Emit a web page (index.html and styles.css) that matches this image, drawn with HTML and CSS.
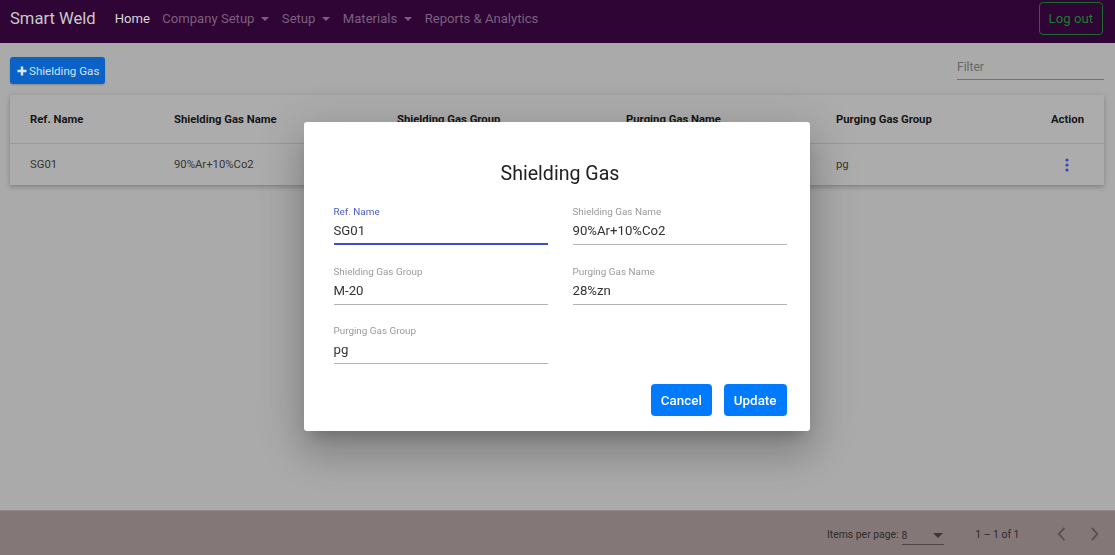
FILE: index.html
```html
<!DOCTYPE html>
<html>
<head>
<meta charset="utf-8">
<link rel="stylesheet" href="styles.css">
</head>
<body>
<nav class="navbar">
  <span class="brand">Smart Weld</span>
  <ul class="nav-links">
    <li class="nav-link active">Home</li>
    <li class="nav-link">Company Setup<span class="caret"></span></li>
    <li class="nav-link">Setup<span class="caret"></span></li>
    <li class="nav-link">Materials<span class="caret"></span></li>
    <li class="nav-link">Reports &amp; Analytics</li>
  </ul>
  <button class="logout">Log out</button>
</nav>

<main class="content">
  <div class="toolbar">
    <button class="add-btn"><svg class="plus" viewBox="0 0 10 10" width="10" height="10"><path d="M5 0.5v9M0.5 5h9" stroke="#d8e6f7" stroke-width="2.4"/></svg>Shielding Gas</button>
    <div class="filter"><span>Filter</span></div>
  </div>

  <div class="table-card">
    <div class="trow thead">
      <div>Ref. Name</div>
      <div>Shielding Gas Name</div>
      <div>Shielding Gas Group</div>
      <div>Purging Gas Name</div>
      <div>Purging Gas Group</div>
      <div class="action">Action</div>
    </div>
    <div class="trow tbody">
      <div>SG01</div>
      <div>90%Ar+10%Co2</div>
      <div>M-20</div>
      <div>28%zn</div>
      <div>pg</div>
      <div class="action"><svg viewBox="0 0 4 14" width="4" height="14"><circle cx="2" cy="2" r="1.6" fill="#3447b5"/><circle cx="2" cy="7" r="1.6" fill="#3447b5"/><circle cx="2" cy="12" r="1.6" fill="#3447b5"/></svg></div>
    </div>
  </div>
</main>

<footer class="paginator">
  <span class="pg-label">Items per page:</span>
  <div class="pg-select"><span>8</span><span class="pg-arrow"></span></div>
  <span class="pg-range">1 – 1 of 1</span>
  <svg class="chev" viewBox="0 0 10 16" width="10" height="16"><path d="M8 1.5L2 8l6 6.5" fill="none" stroke="#5a5252" stroke-width="2"/></svg>
  <svg class="chev" viewBox="0 0 10 16" width="10" height="16"><path d="M2 1.5L8 8l-6 6.5" fill="none" stroke="#5a5252" stroke-width="2"/></svg>
</footer>

<div class="backdrop">
  <div class="dialog">
    <h2 class="dialog-title">Shielding Gas</h2>
    <div class="form-grid">
      <div class="field focused">
        <label>Ref. Name</label>
        <div class="value">SG01</div>
      </div>
      <div class="field">
        <label>Shielding Gas Name</label>
        <div class="value">90%Ar+10%Co2</div>
      </div>
      <div class="field">
        <label>Shielding Gas Group</label>
        <div class="value">M-20</div>
      </div>
      <div class="field">
        <label>Purging Gas Name</label>
        <div class="value">28%zn</div>
      </div>
      <div class="field">
        <label>Purging Gas Group</label>
        <div class="value">pg</div>
      </div>
    </div>
    <div class="dialog-actions">
      <button class="btn-primary">Cancel</button>
      <button class="btn-primary">Update</button>
    </div>
  </div>
</div>
</body>
</html>
```

FILE: styles.css
```css
* { box-sizing: border-box; }
html, body { margin: 0; padding: 0; }
body {
  width: 1115px;
  height: 555px;
  overflow: hidden;
  font-family: Roboto, "Liberation Sans", sans-serif;
  background: #aaaaaa;
  display: flex;
  flex-direction: column;
}

/* Navbar */
.navbar {
  height: 43px;
  flex: none;
  background: #2f0535;
  display: flex;
  align-items: center;
  padding: 0 12px 6px 10px;
  white-space: nowrap;
}
.brand {
  font-size: 16.6px;
  color: #c9c9c9;
  margin-right: 13px;
}
.nav-links {
  list-style: none;
  margin: 0;
  padding: 0;
  display: flex;
  flex: 1;
}
.nav-link {
  font-size: 13.1px;
  color: #7b607f;
  padding: 0 6.2px;
  display: flex;
  align-items: center;
}
.nav-link:first-child { padding-left: 6px; }
.nav-link.active { color: #d6d6d6; }
.caret {
  display: inline-block;
  margin-left: 7px;
  width: 0;
  height: 0;
  border-left: 4px solid transparent;
  border-right: 4px solid transparent;
  border-top: 4px solid #7b607f;
}
.logout {
  height: 33px;
  padding: 0 9px;
  background: transparent;
  border: 1px solid #1c6b2c;
  border-radius: 4px;
  color: #1d7a31;
  font-family: inherit;
  font-size: 13.2px;
}

/* Content */
.content {
  flex: 1;
  padding: 14px 11px 0 10px;
}
.toolbar {
  display: flex;
  justify-content: space-between;
  align-items: flex-start;
}
.add-btn {
  height: 27px;
  padding: 0 6px 0 7px;
  background: #0a62c6;
  color: #d2e2f4;
  border: none;
  border-radius: 3px;
  font-family: inherit;
  font-size: 11.6px;
  display: flex;
  align-items: center;
  gap: 2px;
  box-shadow: 0 1px 2px rgba(0,0,0,0.2);
  white-space: nowrap;
}
.filter {
  width: 147px;
  margin-top: 1px;
  height: 22px;
  border-bottom: 1px solid #707070;
  font-size: 12px;
  color: #666;
  padding-top: 2px;
}

.table-card {
  margin-top: 11px;
  background: #acacac;
  box-shadow: 0 2px 4px rgba(0,0,0,0.18), 0 1px 8px rgba(0,0,0,0.08);
}
.trow {
  display: grid;
  grid-template-columns: 144px 223px 229px 210px 1fr 60px;
  align-items: center;
  padding: 0 20px;
  font-size: 11.3px;
  white-space: nowrap;
}
.thead {
  height: 49px;
  font-weight: 700;
  color: #161616;
  border-bottom: 1px solid #999;
  padding-top: 1px;
}
.tbody {
  height: 41px;
  color: #363636;
}
.action { text-align: right; }
.tbody .action { padding-right: 15px; display: flex; justify-content: flex-end; }

/* Paginator */
.paginator {
  flex: none;
  height: 45px;
  background: #837877;
  border-top: 1px solid #938a89;
  display: flex;
  align-items: center;
  padding: 2px 16px 0 827px;
  font-size: 10.4px;
  color: #2f2a2a;
  white-space: nowrap;
}
.pg-select {
  margin-left: 3px;
  width: 46px;
  height: 17px;
  border-bottom: 1px solid #4e4646;
  display: flex;
  justify-content: space-between;
  align-items: center;
  margin-top: 4px;
}
.pg-arrow {
  width: 0; height: 0;
  border-left: 5px solid transparent;
  border-right: 5px solid transparent;
  border-top: 5px solid #3e3737;
  margin-right: 1px;
}
.pg-range { margin-left: 31px; margin-right: 38px; }
.chev { margin-right: 23px; }
.chev:last-child { margin-right: 0; }

/* Dialog */
.backdrop {
  position: fixed;
  inset: 0;
  display: flex;
  align-items: center;
  justify-content: center;
}
.dialog {
  width: 506px;
  height: 309px;
  background: #fff;
  border-radius: 3px;
  box-shadow: 0 11px 15px -7px rgba(0,0,0,.2), 0 24px 38px 3px rgba(0,0,0,.14), 0 9px 46px 8px rgba(0,0,0,.12);
  padding: 40px 23px 15px 30px;
  margin-left: -2px;
  margin-top: -2px;
}
.dialog-title {
  margin: 0;
  font-size: 19.6px;
  line-height: 24px;
  font-weight: 400;
  color: #212121;
  text-align: center;
}
.form-grid {
  margin-top: 19px;
  display: grid;
  grid-template-columns: 214px 214px;
  column-gap: 25px;
  row-gap: 19.5px;
}
.field {
  border-bottom: 1px solid #b3b3b3;
  padding-bottom: 3px;
}
.field label {
  display: block;
  font-size: 9.9px;
  line-height: 14px;
  color: #9a9a9a;
  margin-bottom: 2px;
}
.field .value {
  font-size: 13.2px;
  line-height: 20px;
  color: #333;
}
.field.focused { border-bottom: 2px solid #3f4fc2; padding-bottom: 2px; }
.field.focused label { color: #4a5bc6; }

.dialog-actions {
  margin-top: 20px;
  display: flex;
  justify-content: flex-end;
  gap: 12px;
}
.btn-primary {
  height: 32px;
  padding: 0 10px;
  background: #007bff;
  color: #fff;
  border: none;
  border-radius: 4px;
  font-family: inherit;
  font-size: 13.4px;
  font-weight: 500;
}
```
